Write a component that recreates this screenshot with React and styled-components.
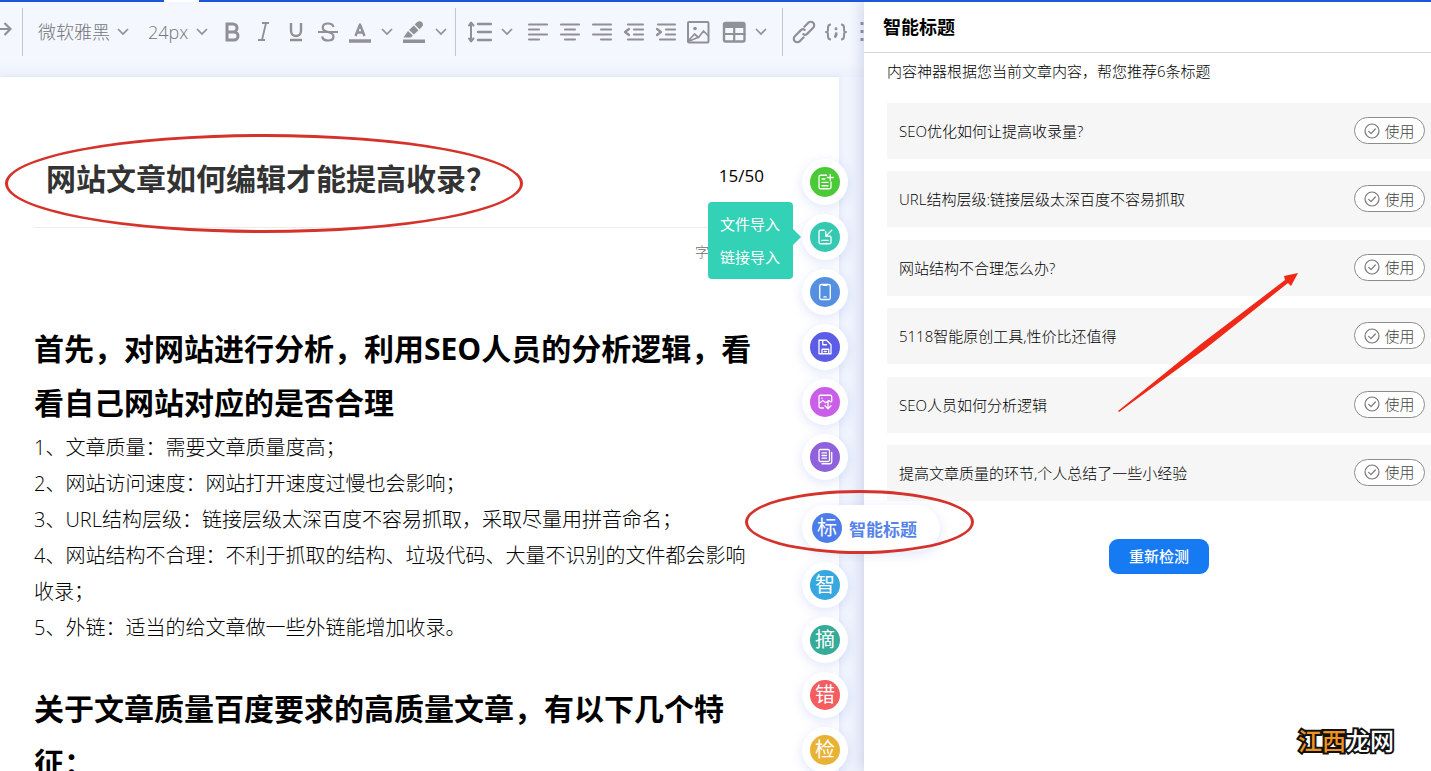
import React, { useState } from 'react';
import styled, { createGlobalStyle, css } from 'styled-components';

const GlobalStyle = createGlobalStyle`
  * {
    box-sizing: border-box;
  }

  body {
    margin: 0;
    background: #ffffff;
    color: #000000;
    font-family: "Open Sans", "Noto Sans CJK SC", sans-serif;
    font-size: 15px;
    font-weight: 300;
  }

  button, select, input {
    font-family: inherit;
    font-weight: inherit;
    margin: 0;
  }

  button {
    cursor: pointer;
  }
`;

const Page = styled.div`
  position: relative;
  height: 100vh;
  display: flex;
  flex-direction: column;
  overflow: hidden;
`;

const TopLine = styled.div`
  flex: none;
  height: 2px;
  background: #1b55dc;
`;

const ActiveTab = styled.div`
  width: 35px;
  height: 2px;
  margin-left: 164px;
  background: #ffffff;
`;

const Main = styled.div`
  flex: 1;
  min-height: 0;
  display: flex;
`;

// 编辑区
const Editor = styled.section`
  position: relative;
  flex: 1;
  min-width: 0;
  display: flex;
  flex-direction: column;
  background: #f0f4fd;
`;

const Toolbar = styled.div`
  flex: none;
  height: 75px;
  padding-top: 6px;
  display: flex;
  align-items: flex-start;
  overflow: hidden;
  background: linear-gradient(#f4f7fd 60px, #ecf1fc);
`;

const Divider = styled.div`
  flex: none;
  width: 1px;
  height: 48px;
  background: #c3c6cc;
`;

const ToolGroup = styled.div`
  flex: none;
  height: 48px;
  display: flex;
  align-items: center;
  margin-left: ${(p) => p.$start || 0}px;
  margin-right: ${(p) => p.$end || 0}px;
`;

const Pickers = styled(ToolGroup)`
  gap: 19px;
`;

const Tool = styled.button`
  width: ${(p) => (p.$narrow ? 22 : 32)}px;
  height: 32px;
  padding: 0;
  border: none;
  background: none;
  color: #8f9195;
  display: flex;
  align-items: center;
  justify-content: center;
  flex: none;
`;

const Picker = styled.label`
  display: flex;
  align-items: center;
  gap: 7px;
  color: #8f9195;
`;

const PickerSelect = styled.select`
  appearance: none;
  border: none;
  outline: none;
  padding: 0;
  background: none;
  color: #73757a;
  font-size: 18px;
  line-height: 28px;
`;

const Article = styled.article`
  flex: 1;
  min-height: 0;
  margin-right: 25px;
  padding: 0 75px 0 34px;
  overflow: hidden;
  background: #ffffff;
  box-shadow: 0 0 6px rgba(150, 170, 230, 0.2);
`;

const TitleRow = styled.div`
  height: 151px;
  padding: 50px 0 0 12px;
  display: flex;
  align-items: center;
  justify-content: space-between;
  border-bottom: 1px solid #ececec;
`;

const TitleInput = styled.input`
  flex: 1;
  min-width: 0;
  height: 48px;
  padding: 0;
  border: none;
  outline: none;
  background: none;
  color: #333333;
  font-size: 30px;
  font-weight: 700;
`;

const Counter = styled.span`
  padding-bottom: 4px;
  font-size: 17px;
  font-weight: 400;
`;

const WordCount = styled.div`
  height: 94px;
  padding: 14px 55px 0 0;
  text-align: right;
  font-size: 14px;
  line-height: 20px;
  color: #707070;
`;

const Heading = styled.h2`
  margin: 0;
  font-size: 30px;
  line-height: 54px;
  font-weight: 700;
`;

const Paragraph = styled.p`
  margin: 0;
  padding-right: 4px;
  min-height: 36px;
  font-size: 20px;
  line-height: 36px;
`;

// 右侧悬浮工具
const FloatMenu = styled.nav`
  position: absolute;
  z-index: 2;
  top: 157px;
  right: 16px;
  width: 46px;
  display: flex;
  flex-direction: column;
  gap: 9px;
`;

const FloatItem = styled.div`
  position: relative;
`;

const FloatButton = styled.button`
  width: 46px;
  height: 46px;
  padding: 0;
  border: none;
  border-radius: 23px;
  background: #ffffff;
  box-shadow: 0 3px 12px rgba(110, 140, 230, 0.22);
  display: flex;
  align-items: center;
  justify-content: center;

  ${(p) =>
    p.$wide &&
    css`
      width: 138px;
      margin: 16px 0 2px;
      padding-left: 10px;
      gap: 7px;
      justify-content: flex-start;
      color: #5683ea;
      font-size: 17px;
      font-weight: 700;
    `}
`;

const Disc = styled.span`
  flex: none;
  width: 30px;
  height: 30px;
  border-radius: 50%;
  background: ${(p) => p.$color};
  color: #ffffff;
  font-size: 20px;
  line-height: 30px;
  font-weight: 400;
  display: flex;
  align-items: center;
  justify-content: center;
`;

const ImportMenu = styled.div`
  position: absolute;
  top: -12px;
  right: 55px;
  padding: 6px 13px 5px 12px;
  border-radius: 4px;
  background: #33d1b6;
  display: flex;
  flex-direction: column;

  &::after {
    content: "";
    position: absolute;
    top: 27px;
    left: 100%;
    border: 8px solid transparent;
    border-left-color: #33d1b6;
    border-right-width: 0;
  }
`;

const ImportOption = styled.button`
  padding: 0;
  border: none;
  background: none;
  color: #ffffff;
  font-size: 15px;
  line-height: 33px;
  font-weight: 400;
  white-space: nowrap;
`;

// 智能标题面板
const Panel = styled.aside`
  position: relative;
  z-index: 1;
  flex: none;
  width: 567px;
  background: #ffffff;
  box-shadow: -3px 0 12px rgba(90, 100, 170, 0.22);
`;

const PanelTitle = styled.h1`
  margin: 0;
  height: 51px;
  padding-left: 19px;
  border-bottom: 1px solid #d8d8d8;
  font-size: 18px;
  line-height: 51px;
  font-weight: 700;
`;

const PanelBody = styled.div`
  padding-left: 23px;
`;

const Hint = styled.p`
  margin: 0;
  padding: 6px 0 20px;
  line-height: 24px;
`;

const Suggestions = styled.ul`
  margin: 0;
  padding: 0;
  min-height: 398px;
  display: flex;
  flex-direction: column;
  justify-content: space-between;
  list-style: none;
`;

const Suggestion = styled.li`
  height: 56px;
  padding: 0 6px 1px 12px;
  display: flex;
  align-items: center;
  justify-content: space-between;
  background: #f6f6f6;
`;

const UseButton = styled.button`
  width: 71px;
  height: 27px;
  padding: 0;
  border: 1px solid #8c8c8c;
  border-radius: 14px;
  background: #ffffff;
  color: #444444;
  font-size: 15px;
  line-height: 24px;
  display: flex;
  align-items: center;
  justify-content: center;
  gap: 4px;

  svg {
    color: #777777;
  }
`;

const RetryButton = styled.button`
  display: block;
  width: 100px;
  height: 35px;
  margin: 38px auto 0;
  padding: 0 0 2px;
  border: none;
  border-radius: 9px;
  background: #167af3;
  color: #ffffff;
  font-size: 15px;
  font-weight: 500;
`;

// 标注
const Circled = styled.div`
  position: absolute;
  z-index: 3;
  left: ${(p) => p.$x}px;
  top: ${(p) => p.$y}px;
  width: ${(p) => p.$w}px;
  height: ${(p) => p.$h}px;
  border: 3px solid #d4322b;
  border-radius: 50%;
  pointer-events: none;
`;

const Arrow = styled.svg`
  position: absolute;
  z-index: 3;
  left: 1117px;
  top: 272px;
  pointer-events: none;
`;

const Watermark = styled.div`
  position: absolute;
  z-index: 3;
  right: 37px;
  bottom: 12px;
  color: #ffffff;
  font-size: 24px;
  line-height: 36px;
  font-weight: 500;
  -webkit-text-stroke: 4px #111111;
  paint-order: stroke fill;

  span {
    color: #f0921e;
  }
`;

const Icon = ({ children, size = 24, width = 2 }) => (
  <svg
    width={size}
    height={size}
    viewBox="0 0 24 24"
    fill="none"
    stroke="currentColor"
    strokeWidth={width}
    strokeLinecap="round"
    strokeLinejoin="round"
    aria-hidden="true"
  >
    {children}
  </svg>
);

const Chevron = () => (
  <svg width="12" height="8" viewBox="0 0 12 8" fill="none" stroke="currentColor" strokeWidth="1.7" aria-hidden="true">
    <path d="M1 1l5 5 5-5" />
  </svg>
);

const icons = {
  bold: <path d="M7 4h6a4 4 0 0 1 0 8H7zM7 12h7a4 4 0 0 1 0 8H7z" strokeWidth="3" strokeLinejoin="miter" />,
  italic: <path d="M10 3h7M6 20h7M14 3l-4 17" strokeWidth="1.8" strokeLinecap="butt" />,
  underline: <path d="M7 3v8a5 5 0 0 0 10 0V3M6 20h12" strokeLinecap="butt" strokeWidth="2.4" />,
  strike: (
    <path
      d="M2 12h20M17.500 7C17 4.500 15 3.500 12 3.500c-3.200 0-5.300 1.700-5.300 4.200 0 2.300 1.900 3.400 5.300 4.300 3.600 1 5.500 2 5.500 4.400 0 2.500-2.200 4.100-5.500 4.100s-5.500-1.500-5.800-4"
      strokeLinecap="butt"
      strokeWidth="2.200"
    />
  ),
  color: (
    <>
      <path d="M7.500 16L12 4.500 16.500 16M9 12.500h6" strokeLinecap="butt" strokeWidth="2.400" />
      <path d="M1 21h22" strokeLinecap="butt" strokeWidth="3.500" />
    </>
  ),
  marker: (
    <g fill="currentColor" stroke="none">
      <path d="M15 2.300c1.600-1.500 3.500-1.500 5 0s1.300 3.300-.2 4.800l-2.300 2.200-4.800-4.700zM11.800 5.500l4.700 4.700-4.700 4.400-4.700-4.700zM6 10.900l4.800 4.700L9 17.500H1.500z" />
      <path d="M1 19.500h22v3.500H1z" />
    </g>
  ),
  lineHeight: (
    <>
      <path d="M3 3v18M1 5.500L3 2.500l2.500 3M1 18.500l2 3 2.500-3" />
      <path d="M10 4h13M10 12h13M10 20h13" strokeWidth="2.400" />
    </>
  ),
  left: <path d="M3 4.500h18M3 9.500h10M3 14.500h18M3 19.500h10" strokeWidth="2.200" />,
  center: <path d="M3 4.500h18M7 9.500h10M3 14.500h18M7 19.500h10" strokeWidth="2.200" />,
  right: <path d="M3 4.500h18M11 9.500h10M3 14.500h18M11 19.500h10" strokeWidth="2.200" />,
  outdent: <path d="M6 4.500h15M12 9.500h9M12 14.500h9M6 19.500h15M7 9l-4 3 4 3" strokeWidth="2.200" />,
  indent: <path d="M4 4.500h17M12 9.500h9M12 14.500h9M6 19.500h15M3 9l4 3-4 3" strokeWidth="2.200" />,
  image: (
    <>
      <rect x="2" y="2" width="20.500" height="20.500" rx="1" />
      <circle cx="9" cy="8.500" r="1.800" fill="currentColor" stroke="none" />
      <path d="M3.500 19.500l5-5.500 4 3.500 5-6.500 4.500 4.500M3.500 21l9.500-4" strokeWidth="1.700" />
    </>
  ),
  table: (
    <>
      <rect x="2" y="3" width="20.500" height="18.500" rx="1.500" strokeWidth="2.400" />
      <path d="M2 14h20.500M12.200 7v14" strokeWidth="2.200" />
      <path d="M2.500 3.500h19.500v4h-19.500z" fill="currentColor" strokeWidth="1" />
    </>
  ),
  link: (
    <g strokeWidth="2.200" transform="rotate(-45 12 12)">
      <path d="M8 15.500H2.500a3.500 3.500 0 0 1 0-7h9a3 3 0 0 1 2.500 2.500" />
      <path d="M16 8.500h5.500a3.500 3.500 0 0 1 0 7h-9a3 3 0 0 1-2.500-2.500" />
    </g>
  ),
  code: (
    <>
      <path d="M7 4.500c-2.500 0-3 1-3 3v2c0 1.500-.5 2.500-2 2.500 1.500 0 2 1 2 2.500v2c0 2 .5 3 3 3M17 4.500c2.500 0 3 1 3 3v2c0 1.500.5 2.500 2 2.500-1.500 0-2 1-2 2.500v2c0 2-.5 3-3 3" strokeLinecap="butt" />
      <path d="M12 8.700v.2M12.200 13.700v.8l-.9 2" strokeWidth="2.800" />
    </>
  ),
  more: <path d="M6 2v3M6 10v3M6 18v3" strokeLinecap="butt" strokeWidth="3" />,
};

const floatIcons = {
  create: <path d="M14 3H6a2 2 0 0 0-2 2v14a2 2 0 0 0 2 2h12a2 2 0 0 0 2-2v-7M19 2v8M15 6h8M8 8h4M8 12.500h8M8 17h8" />,
  importFile: <path d="M11 3H6a2 2 0 0 0-2 2v14a2 2 0 0 0 2 2h12a2 2 0 0 0 2-2v-7M21 3l-8 8M13 5v6h6M8 16.500h8" />,
  phone: <path d="M7 2h10a2 2 0 0 1 2 2v16a2 2 0 0 1-2 2H7a2 2 0 0 1-2-2V4a2 2 0 0 1 2-2zM9.500 3h5M10.500 18.500h3" />,
  save: <path d="M4 3h10l6 6v12H4zM9 3v6h5M8 21v-6h9v6M11 18h3" />,
  picture: <path d="M10 20H6a2 2 0 0 1-2-2V5a2 2 0 0 1 2-2h13a2 2 0 0 1 2 2v6M4 14l5-4 4 3 4-3 3 2M8 7h.1M16 12v9M12 17l4 4 4-4" />,
  copy: <path d="M6 2h10a2 2 0 0 1 2 2v12a2 2 0 0 1-2 2H6a2 2 0 0 1-2-2V4a2 2 0 0 1 2-2zM21 6v12a3 3 0 0 1-3 3H8M8 6.500h6M8 10h6M8 13.500h6" />,
};

const floatTools = [
  { id: 'create', label: '新建', color: '#4bc936' },
  { id: 'importFile', label: '导入', color: '#35c9b2' },
  { id: 'phone', label: '手机预览', color: '#5590e0' },
  { id: 'save', label: '保存', color: '#5c5ce6' },
  { id: 'picture', label: '图片', color: '#c95ee8' },
  { id: 'copy', label: '复制', color: '#8f61dc' },
  { id: 'title', text: '标', color: '#4d7de8', wide: true },
  { id: 'smart', text: '智', color: '#35a8e0' },
  { id: 'summary', text: '摘', color: '#35ab98' },
  { id: 'typo', text: '错', color: '#f45c5f' },
  { id: 'check', text: '检', color: '#e8b235' },
];

const suggestions = [
  'SEO优化如何让提高收录量?',
  'URL结构层级:链接层级太深百度不容易抓取',
  '网站结构不合理怎么办?',
  '5118智能原创工具,性价比还值得',
  'SEO人员如何分析逻辑',
  '提高文章质量的环节,个人总结了一些小经验',
];

const paragraphs = [
  '1、文章质量：需要文章质量度高；',
  '2、网站访问速度：网站打开速度过慢也会影响；',
  '3、URL结构层级：链接层级太深百度不容易抓取，采取尽量用拼音命名；',
  '4、网站结构不合理：不利于抓取的结构、垃圾代码、大量不识别的文件都会影响收录；',
  '5、外链：适当的给文章做一些外链能增加收录。',
];

const ToolButton = ({ name, label }) => (
  <Tool type="button" aria-label={label}>
    <Icon>{icons[name]}</Icon>
  </Tool>
);

const MoreButton = ({ label }) => (
  <Tool type="button" $narrow aria-label={label}>
    <Chevron />
  </Tool>
);

function EditorToolbar() {
  return (
    <Toolbar>
      <ToolGroup $end={10}>
        <svg width="12" height="20" viewBox="0 0 12 20" fill="none" stroke="#8f9195" strokeWidth="2.200" aria-hidden="true">
          <path d="M0 7h10.500M4.500 1l6 6-6 6" />
        </svg>
      </ToolGroup>
      <Divider />
      <Pickers $start={15} $end={8}>
        <Picker>
          <PickerSelect aria-label="字体" defaultValue="微软雅黑">
            <option>微软雅黑</option>
          </PickerSelect>
          <Chevron />
        </Picker>
        <Picker>
          <PickerSelect aria-label="字号" defaultValue="24px">
            <option>24px</option>
          </PickerSelect>
          <Chevron />
        </Picker>
      </Pickers>
      <ToolGroup $end={3}>
        <ToolButton name="bold" label="加粗" />
        <ToolButton name="italic" label="斜体" />
        <ToolButton name="underline" label="下划线" />
        <ToolButton name="strike" label="删除线" />
        <ToolButton name="color" label="文字颜色" />
        <MoreButton label="选择文字颜色" />
        <ToolButton name="marker" label="背景颜色" />
        <MoreButton label="选择背景颜色" />
      </ToolGroup>
      <Divider />
      <ToolGroup $start={8} $end={4}>
        <ToolButton name="lineHeight" label="行高" />
        <MoreButton label="选择行高" />
      </ToolGroup>
      <ToolGroup $end={4}>
        <ToolButton name="left" label="左对齐" />
        <ToolButton name="center" label="居中" />
        <ToolButton name="right" label="右对齐" />
        <ToolButton name="outdent" label="减少缩进" />
        <ToolButton name="indent" label="增加缩进" />
        <ToolButton name="image" label="图片" />
      </ToolGroup>
      <ToolGroup $end={10}>
        <ToolButton name="table" label="表格" />
        <MoreButton label="选择表格" />
      </ToolGroup>
      <Divider />
      <ToolGroup $start={5}>
        <ToolButton name="link" label="链接" />
        <ToolButton name="code" label="代码" />
        <ToolButton name="more" label="更多" />
      </ToolGroup>
    </Toolbar>
  );
}

function App() {
  const [title, setTitle] = useState('网站文章如何编辑才能提高收录？');

  return (
    <Page>
      <GlobalStyle />
      <TopLine>
        <ActiveTab />
      </TopLine>
      <Main>
        <Editor>
          <EditorToolbar />
          <Article>
            <TitleRow>
              <TitleInput aria-label="文章标题" value={title} onChange={(e) => setTitle(e.target.value)} />
              <Counter>{title.length}/50</Counter>
            </TitleRow>
            <WordCount>字</WordCount>
            <Heading>
              首先，对网站进行分析，利用SEO人员的分析逻辑，看
              <br />
              看自己网站对应的是否合理
            </Heading>
            {paragraphs.map((text) => (
              <Paragraph key={text}>{text}</Paragraph>
            ))}
            <Paragraph />
            <Heading>
              关于文章质量百度要求的高质量文章，有以下几个特
              <br />
              征：
            </Heading>
          </Article>

          <FloatMenu>
            {floatTools.map((tool) => (
              <FloatItem key={tool.id}>
                <FloatButton type="button" $wide={tool.wide} aria-label={tool.label}>
                  <Disc $color={tool.color}>
                    {tool.text || (
                      <Icon size={18} width={1.7}>
                        {floatIcons[tool.id]}
                      </Icon>
                    )}
                  </Disc>
                  {tool.wide && '智能标题'}
                </FloatButton>
                {tool.id === 'importFile' && (
                  <ImportMenu>
                    <ImportOption type="button">文件导入</ImportOption>
                    <ImportOption type="button">链接导入</ImportOption>
                  </ImportMenu>
                )}
              </FloatItem>
            ))}
          </FloatMenu>
        </Editor>

        <Panel>
          <PanelTitle>智能标题</PanelTitle>
          <PanelBody>
            <Hint>内容神器根据您当前文章内容，帮您推荐6条标题</Hint>
            <Suggestions>
              {suggestions.map((text) => (
                <Suggestion key={text}>
                  <span>{text}</span>
                  <UseButton type="button">
                    <Icon size={16} width={1.8}>
                      <circle cx="12" cy="12" r="10.500" />
                      <path d="M7 12.500l3.500 3.500L17 9" />
                    </Icon>
                    使用
                  </UseButton>
                </Suggestion>
              ))}
            </Suggestions>
            <RetryButton type="button">重新检测</RetryButton>
          </PanelBody>
        </Panel>
      </Main>

      <Circled $x={5} $y={134} $w={518} $h={99} />
      <Circled $x={745} $y={490} $w={229} $h={64} />
      <Arrow width="182" height="141" viewBox="0 0 182 141" aria-hidden="true">
        <path d="M1 139L84 72 168 8 167 4 181 1 174 14 171 11 88 77 2 140z" fill="#f02817" />
      </Arrow>
      <Watermark>
        <span>江西</span>龙网
      </Watermark>
    </Page>
  );
}

export default App;
